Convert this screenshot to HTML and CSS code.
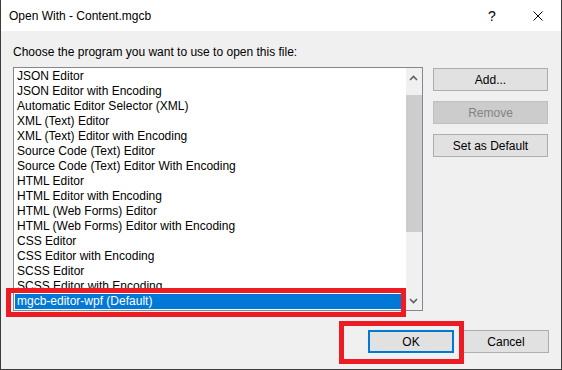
FILE: index.html
```html
<!DOCTYPE html>
<html>
<head>
  <title>Open With - Content.mgcb</title>
  <link rel="stylesheet" href="styles.css">
</head>
<body>
  <div class="window">
    <div class="titlebar">
      <span class="title">Open With - Content.mgcb</span>
      <span class="caption-btn help">?</span>
      <span class="caption-btn">
        <svg width="10" height="10" viewBox="0 0 10 10">
          <path d="M0.5 0.5L9.5 9.5M9.5 0.5L0.5 9.5" stroke="#000" stroke-width="1" fill="none"/>
        </svg>
      </span>
    </div>

    <div class="content">
      <div class="prompt">Choose the program you want to use to open this file:</div>

      <div class="main">
        <div class="listbox">
          <div class="items">
            <div class="item">JSON Editor</div>
            <div class="item">JSON Editor with Encoding</div>
            <div class="item">Automatic Editor Selector (XML)</div>
            <div class="item">XML (Text) Editor</div>
            <div class="item">XML (Text) Editor with Encoding</div>
            <div class="item">Source Code (Text) Editor</div>
            <div class="item">Source Code (Text) Editor With Encoding</div>
            <div class="item">HTML Editor</div>
            <div class="item">HTML Editor with Encoding</div>
            <div class="item">HTML (Web Forms) Editor</div>
            <div class="item">HTML (Web Forms) Editor with Encoding</div>
            <div class="item">CSS Editor</div>
            <div class="item">CSS Editor with Encoding</div>
            <div class="item">SCSS Editor</div>
            <div class="item">SCSS Editor with Encoding</div>
            <div class="item selected">mgcb-editor-wpf (Default)</div>
          </div>
          <div class="scrollbar">
            <div class="arrow">
              <svg width="16" height="17" viewBox="0 0 16 17">
                <polyline points="4,12 7.5,8.5 11,12" stroke="#606060" stroke-width="1.6" fill="none"/>
              </svg>
            </div>
            <div class="track"><div class="thumb"></div></div>
            <div class="arrow">
              <svg width="16" height="17" viewBox="0 0 16 17">
                <polyline points="4,6 7.5,9.5 11,6" stroke="#606060" stroke-width="1.6" fill="none"/>
              </svg>
            </div>
          </div>
        </div>

        <div class="side">
          <button class="btn">Add...</button>
          <button class="btn" disabled>Remove</button>
          <button class="btn">Set as Default</button>
        </div>
      </div>

      <div class="footer">
        <button class="btn btn-default">OK</button>
        <button class="btn">Cancel</button>
      </div>
    </div>

    <!-- highlight marks drawn over the dialog -->
    <div class="mark mark-list"></div>
    <div class="mark mark-ok"></div>
  </div>
</body>
</html>
```

FILE: styles.css
```css
body {
  margin: 0;
  font-family: "Liberation Sans", Arial, sans-serif;
  font-size: 12px;
  color: #000;
}
.window {
  position: relative;
  width: 562px;
  height: 370px;
  box-sizing: border-box;
  border: 1px solid #3c3c3c;
  border-top: none;
  background: #f0f0f0;
  overflow: hidden;
}
.titlebar {
  height: 31px;
  background: #fff;
  display: flex;
  align-items: center;
  padding-left: 8px;
}
.title {
  flex: 1;
  line-height: 15px;
  padding-top: 1px;
}
.caption-btn {
  width: 46px;
  height: 31px;
  display: flex;
  align-items: center;
  justify-content: center;
}
.help {
  font-size: 14px;
  padding-top: 1px;
  box-sizing: border-box;
}
.content {
  padding: 14px 12px 0 12px;
}
.prompt {
  line-height: 15px;
  margin-bottom: 7px;
}
.main {
  display: grid;
  grid-template-columns: 410px 115px;
  gap: 10px;
  align-items: start;
}
.listbox {
  height: 244px;
  box-sizing: border-box;
  border: 1px solid #828790;
  background: #fff;
  display: flex;
}
.items {
  flex: 1;
  overflow: hidden;
  padding: 1px 0 0 1px;
}
.item {
  height: 15px;
  line-height: 15px;
  padding-left: 2px;
  white-space: nowrap;
  overflow: hidden;
}
.item.selected {
  background: #0078d7;
  color: #fff;
}
.scrollbar {
  width: 16px;
  background: #f0f0f0;
  display: flex;
  flex-direction: column;
}
.arrow {
  height: 17px;
}
.arrow svg {
  display: block;
}
.track {
  flex: 1;
  padding-top: 10px;
}
.thumb {
  height: 137px;
  background: #cdcdcd;
}
.side {
  display: flex;
  flex-direction: column;
  gap: 10px;
  padding-top: 1px;
}
.btn {
  height: 23px;
  box-sizing: border-box;
  border: 1px solid #adadad;
  background: #e1e1e1;
  font-family: "Liberation Sans", Arial, sans-serif;
  font-size: 12px;
  color: #000;
  padding: 0;
}
.btn:disabled {
  background: #cccccc;
  border-color: #bfbfbf;
  color: #838383;
}
.btn-default {
  border: 2px solid #0078d7;
}
.footer {
  display: flex;
  justify-content: flex-end;
  gap: 9px;
  margin-top: 19px;
}
.footer .btn {
  width: 86px;
}
.mark {
  position: absolute;
  box-sizing: border-box;
  border: 5px solid #ed1c24;
}
.mark-list {
  left: 5px;
  top: 288px;
  width: 400px;
  height: 29px;
}
.mark-ok {
  left: 338px;
  top: 321px;
  width: 125px;
  height: 43px;
}
```
